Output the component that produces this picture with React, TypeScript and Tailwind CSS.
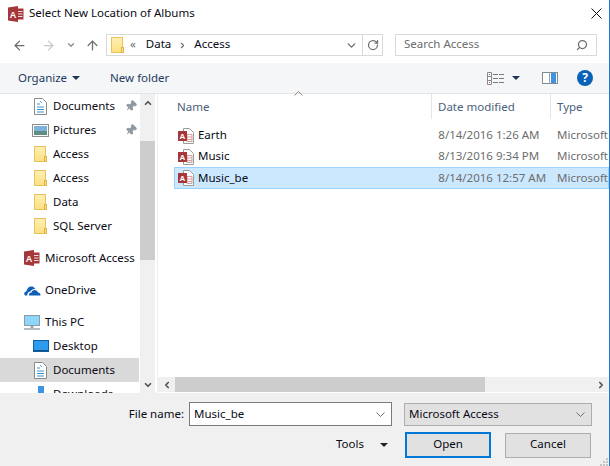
import { ArrowLeft, ArrowRight, ArrowUp, ChevronDown, ChevronUp, ChevronLeft, ChevronRight, RotateCw, Search, Pin } from "lucide-react";

const Folder = () => (
  <svg width="13" height="16" viewBox="0 0 13 16">
    <defs>
      <linearGradient id="fold" x1="0" y1="0" x2="0" y2="1">
        <stop offset="0" stopColor="#fdf0b4" />
        <stop offset="1" stopColor="#fde07f" />
      </linearGradient>
    </defs>
    <rect x="0.5" y="0.5" width="11" height="15" fill="url(#fold)" stroke="#e8c45c" />
    <rect x="10.500" y="10.500" width="2" height="5" fill="#fbe28a" stroke="#dcb44a" />
  </svg>
);

const AccessBadge = ({ size = 16 }: { size?: number }) => (
  <svg width={size} height={size} viewBox="0 0 16 16">
    <path d="M8 2.500h7.500v11H8z" fill="#a4373a" />
    <path d="M10 5.500h4.500M10 8h4.500M10 10.500h4.500" stroke="#f3dcdc" />
    <path d="M0 1.500 10 0v16L0 14.500z" fill="#a4373a" />
    <text x="5" y="11.500" textAnchor="middle" fontSize="9" fontWeight="700" fill="#fff" fontFamily="'Liberation Sans', sans-serif">A</text>
  </svg>
);

const DocIcon = () => (
  <svg width="13" height="17" viewBox="0 0 13 17">
    <path d="M.5.500h8l4 4v12H.5z" fill="#fff" stroke="#8a8a8a" />
    <path d="M3 6h3M3 9h7M3 11.500h7M3 14h7" stroke="#3c8fd0" />
    <path d="M6 3l2 2" stroke="#5a9bd0" />
  </svg>
);

const PicturesIcon = () => (
  <svg width="17" height="13" viewBox="0 0 17 13">
    <rect x="0.500" y="0.500" width="16" height="12" fill="#fff" stroke="#8e8e8e" />
    <rect x="2" y="2" width="13" height="5" fill="#7db2dc" />
    <rect x="2" y="7" width="13" height="4" fill="#5f8f80" />
  </svg>
);

const FileIcon = () => (
  <svg width="16" height="16" viewBox="0 0 16 16">
    <path d="M5.500.500h6l4 4v11h-10z" fill="#fff" stroke="#9a9a9a" />
    <path d="M9 6.500h5M9 9h5M9 11.500h5" stroke="#e59a9c" />
    <path d="M9 6.500v7h5v-7" fill="none" stroke="#c9a0a0" />
    <rect x="0" y="3" width="9" height="10" fill="#a4373a" />
    <text x="4.500" y="11" textAnchor="middle" fontSize="8" fontWeight="700" fill="#fff" fontFamily="'Liberation Sans', sans-serif">A</text>
  </svg>
);

const CloudIcon = () => (
  <svg width="17" height="11" viewBox="0 0 17 11">
    <path d="M1 10.500c-1.200-1-1-3.600 1.300-4C3 3 5.500 1 8 1.500c1.600.3 2.800 1.200 3.300 2.600-2.400-.3-4 .7-4.800 2.400C4.500 6.600 3 8.500 3.300 10.500z" fill="#0f5fb8" />
    <path d="M5 10.500c-.3-1.700 1-3 2.500-3 .7-2 2.300-2.700 4-2.300 1.400.3 2.200 1.300 2.400 2.300 1.800 0 3 1.500 2.500 3z" fill="#0f5fb8" />
  </svg>
);

const PcIcon = () => (
  <svg width="16" height="15" viewBox="0 0 16 15">
    <rect x="0.500" y="0.500" width="15" height="10" fill="#8fd6fb" stroke="#8a9aa4" />
    <path d="M6.500 11h3v2h-3z" fill="#9aa6ae" />
    <path d="M0 14h16" stroke="#9aa6ae" strokeWidth="1.500" />
  </svg>
);

const DesktopIcon = () => (
  <svg width="16" height="12" viewBox="0 0 16 12">
    <rect x="0.500" y="0.500" width="15" height="11" fill="#2d9bee" stroke="#0f5f9e" />
    <path d="M1 10.500h14" stroke="#0b4f86" />
  </svg>
);

const ViewsIcon = () => (
  <svg width="17" height="13" viewBox="0 0 17 13">
    <path d="M.5.500h4v12h-4zM.5 4.500h4M.5 8.500h4" fill="#fff" stroke="#8a8a8a" />
    <rect x="2" y="2" width="1" height="1" fill="#2b6cb0" />
    <rect x="2" y="10" width="1" height="1" fill="#c23b3b" />
    <path d="M6 2.500h5M12 2.500h5M6 6.500h5M12 6.500h5M6 10.500h5M12 10.500h5" stroke="#7a7a7a" />
  </svg>
);

const PaneIcon = () => (
  <svg width="16" height="12" viewBox="0 0 16 12">
    <rect x="0.500" y="0.500" width="15" height="11" fill="#fff" stroke="#7f8b94" strokeWidth="1" />
    <rect x="9" y="1" width="5" height="10" fill="#3f93e0" />
    <path d="M7.500 1v10" stroke="#9aa4ac" />
  </svg>
);

const Caret = ({ color = "#1f3556" }: { color?: string }) => (
  <svg width="8" height="4" viewBox="0 0 8 4">
    <path d="M0 0h8L4 4z" fill={color} />
  </svg>
);

const SmallChevron = () => (
  <svg width="9" height="5" viewBox="0 0 9 5">
    <path d="M.5.500l4 4 4-4" fill="none" stroke="#6d6d6d" />
  </svg>
);

const navItems = [
  { label: "Documents", icon: <DocIcon />, pin: true },
  { label: "Pictures", icon: <PicturesIcon />, pin: true },
  { label: "Access", icon: <Folder /> },
  { label: "Access", icon: <Folder /> },
  { label: "Data", icon: <Folder /> },
  { label: "SQL Server", icon: <Folder /> },
];

const files = [
  { name: "Earth", date: "8/14/2016 1:26 AM" },
  { name: "Music", date: "8/13/2016 9:34 PM" },
];

const NavRow = ({ label, icon, pin }: { label: string; icon: React.ReactNode; pin?: boolean }) => (
  <div className="flex h-6 items-center pl-[32px]">
    <span className="flex w-[17px] justify-center">{icon}</span>
    <span className="ml-[4px]">{label}</span>
    {pin && <Pin size={12} className="absolute left-[125px] rotate-45 fill-[#8f9aa3] text-[#8f9aa3]" />}
  </div>
);

const TopRow = ({ label, icon }: { label: string; icon: React.ReactNode }) => (
  <div className="flex h-6 items-center pl-[24px]">
    <span className="flex w-[21px] justify-start">{icon}</span>
    <span>{label}</span>
  </div>
);

export default function App() {
  return (
    <div className="relative flex h-[466px] w-[610px] flex-col overflow-hidden border-r border-[#1f7ad0] bg-white font-['Noto_Sans',sans-serif] text-[11.5px] text-[#0a0a14]">
      {/* title */}
      <div className="flex h-[27px] shrink-0 items-center pl-[8px] pr-[7px]">
        <AccessBadge size={16} />
        <span className="ml-[5px] flex-1 pb-[2px]">Select New Location of Albums</span>
        <svg width="11" height="11" viewBox="0 0 11 11"><path d="M.5.500l10 10M10.500.500l-10 10" stroke="#111" /></svg>
      </div>

      {/* address row */}
      <div className="flex h-[36px] shrink-0 items-center pl-[12px] pr-[12px]">
        <ArrowLeft size={15} className="text-[#6d6d6d]" strokeWidth={2} />
        <ArrowRight size={15} className="ml-[14px] text-[#c8c8c8]" strokeWidth={2} />
        <ChevronDown size={10} className="ml-[10px] text-[#8a8a8a]" strokeWidth={3} />
        <ArrowUp size={15} className="ml-[9px] text-[#6d6d6d]" strokeWidth={2} />
        <div className="ml-[6px] flex h-[22px] w-[277px] items-center border border-[#d9d9d9] pl-[4px]">
          <Folder />
          <span className="ml-[6px] pb-[2px] text-[#6d6d6d]">«</span>
          <span className="ml-[10px] pb-[2px]">Data</span>
          <ChevronRight size={9} className="mx-[7px] text-[#6d6d6d]" strokeWidth={3} />
          <span className="pb-[2px]">Access</span>
          <span className="ml-auto flex h-full w-[21px] items-center justify-center">
            <ChevronDown size={13} className="text-[#6d6d6d]" strokeWidth={2.500} />
          </span>
          <span className="flex h-full w-[20px] items-center justify-center border-l border-[#d9d9d9]">
            <RotateCw size={12} className="text-[#6d6d6d]" strokeWidth={2.500} />
          </span>
        </div>
        <div className="ml-auto flex h-[22px] w-[202px] items-center justify-between border border-[#d9d9d9] px-[8px] text-[#6d6d6d]">
          <span className="pb-[2px]">Search Access</span>
          <Search size={12} className="-scale-x-100 text-[#6d6d6d]" strokeWidth={2.500} />
        </div>
      </div>

      {/* toolbar */}
      <div className="flex h-[31px] shrink-0 items-center border-b border-[#e5e5e5] bg-[#f5f6f7] pl-[18px] pr-[16px] text-[#1f3a5f]">
        <span>Organize</span>
        <span className="ml-[5px]"><Caret /></span>
        <span className="ml-[30px]">New folder</span>
        <span className="ml-auto"><ViewsIcon /></span>
        <span className="ml-[8px]"><Caret /></span>
        <span className="ml-[22px]"><PaneIcon /></span>
        <span className="ml-[19px] flex h-4 w-4 items-center justify-center rounded-full bg-[#0a62b8] text-[12px] font-bold text-white">?</span>
      </div>

      {/* body */}
      <div className="flex h-[299px] shrink-0">
        <div className="relative h-full w-[139px] shrink-0 overflow-hidden">
          {navItems.map((n, i) => (
            <div key={i} className="relative">
              <NavRow label={n.label} icon={n.icon} pin={n.pin} />
            </div>
          ))}
          <div className="h-2" />
          <TopRow label="Microsoft Access" icon={<AccessBadge size={16} />} />
          <div className="h-2" />
          <TopRow label="OneDrive" icon={<CloudIcon />} />
          <div className="h-2" />
          <TopRow label="This PC" icon={<PcIcon />} />
          <NavRow label="Desktop" icon={<DesktopIcon />} />
          <div className="bg-[#d9d9d9]">
            <NavRow label="Documents" icon={<DocIcon />} />
          </div>
          <NavRow label="Downloads" icon={<div className="h-[16px] w-[6px] bg-[#3f93e0]" />} />
        </div>

        {/* nav scrollbar */}
        <div className="ml-[1px] flex h-full w-[15px] shrink-0 flex-col bg-[#f0f0f0]">
          <div className="flex h-[47px] items-start justify-center pt-[4px]">
            <ChevronUp size={10} className="text-[#505050]" strokeWidth={4} />
          </div>
          <div className="h-[119px] bg-[#cdcdcd]" />
          <div className="mt-auto flex h-[17px] items-center justify-center">
            <ChevronDown size={10} className="text-[#505050]" strokeWidth={4} />
          </div>
        </div>

        {/* list */}
        <div className="ml-[2px] flex min-w-0 flex-1 flex-col border-l border-[#f0f0f0]">
          <div className="relative flex h-[25px] shrink-0 text-[#4c607a]">
            <span className="absolute left-[136px] top-[-3px]"><svg width="9" height="5" viewBox="0 0 9 5"><path d="M.5 4.500l4-4 4 4" fill="none" stroke="#8a8a8a" /></svg></span>
            <div className="flex w-[274px] items-center border-r border-[#e5e5e5] pl-[19px]">Name</div>
            <div className="flex w-[119px] items-center border-r border-[#e5e5e5] pl-[6px]">Date modified</div>
            <div className="flex flex-1 items-center pl-[6px]">Type</div>
          </div>
          <div className="h-[6px] shrink-0" />
          <div className="min-h-0 flex-1 overflow-hidden pl-[16px]">
            {files.map((f) => (
              <div key={f.name} className="flex h-[21px] items-center border border-transparent pl-[3px]">
                <FileIcon />
                <span className="ml-[4px] w-[241px] pb-[2px]">{f.name}</span>
                <span className="w-[119px] pb-[2px] text-[#6d6d6d]">{f.date}</span>
                <span className="whitespace-nowrap pb-[2px] text-[#6d6d6d]">Microsoft</span>
              </div>
            ))}
            <div className="flex h-[22px] items-center border border-[#99d1ff] bg-[#cce8ff] pl-[3px]">
              <FileIcon />
              <span className="ml-[4px] w-[241px]">Music_be</span>
              <span className="w-[119px] text-[#6d6d6d]">8/14/2016 12:57 AM</span>
              <span className="whitespace-nowrap text-[#6d6d6d]">Microsoft</span>
            </div>
          </div>
          {/* horizontal scrollbar */}
          <div className="mb-[1px] flex h-[15px] shrink-0 items-stretch bg-[#f0f0f0]">
            <div className="flex w-[17px] items-center justify-center"><ChevronLeft size={10} className="text-[#505050]" strokeWidth={4} /></div>
            <div className="w-[310px] bg-[#cdcdcd]" />
            <div className="ml-auto flex w-[17px] items-center justify-center"><ChevronRight size={10} className="text-[#505050]" strokeWidth={4} /></div>
          </div>
        </div>
      </div>

      {/* footer */}
      <div className="flex min-h-0 flex-1 flex-col bg-[#f0f0f0] pr-[17px] pt-[9px]">
        <div className="flex h-[24px] items-center justify-end">
          <span className="mr-[5px]">File name:</span>
          <div className="flex h-[24px] w-[203px] items-center justify-between border border-[#7a7a7a] bg-white pl-[4px] pr-[6px]">
            <span>Music_be</span>
            <SmallChevron />
          </div>
          <div className="ml-[12px] flex h-[23px] w-[188px] items-center justify-between border border-[#adadad] bg-[#e1e1e1] pl-[4px] pr-[6px]">
            <span>Microsoft Access</span>
            <SmallChevron />
          </div>
        </div>
        <div className="mr-[1px] mt-[6px] flex h-[26px] items-center justify-end">
          <span className="pb-[2px]">Tools</span>
          <span className="ml-[16px]"><Caret color="#222" /></span>
          <button className="ml-[17px] h-[26px] w-[86px] border-2 border-[#0078d7] bg-[#e1e1e1] pb-[2px]">Open</button>
          <button className="ml-[14px] h-[25px] w-[86px] border border-[#adadad] bg-[#e1e1e1] pb-[2px]">Cancel</button>
        </div>
      </div>

      {/* resize grip */}
      <svg className="absolute bottom-0 right-0" width="9" height="9" viewBox="0 0 9 9">
        <path d="M6 1h2v2H6zM3 4h2v2H3zM6 4h2v2H6zM0 7h2v2H0zM3 7h2v2H3zM6 7h2v2H6z" fill="#c4c4c4" />
      </svg>
    </div>
  );
}
